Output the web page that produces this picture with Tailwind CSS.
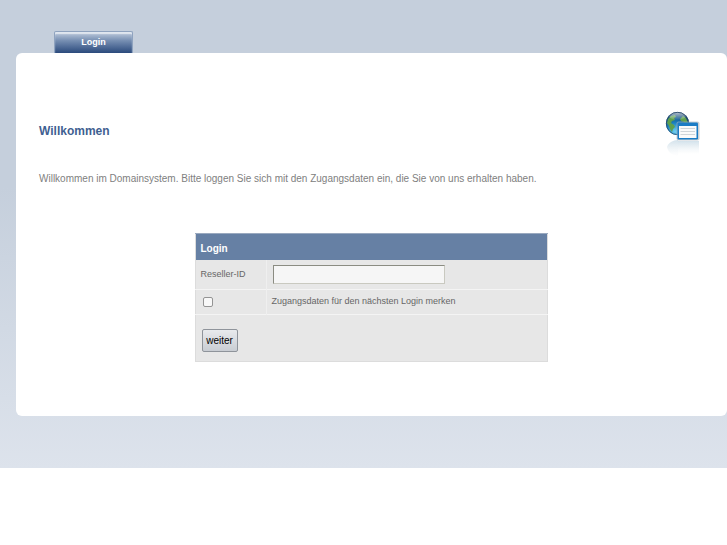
<!DOCTYPE html>
<html lang="de">
<head>
<meta charset="utf-8">
<meta name="viewport" content="width=device-width, initial-scale=1">
<title>Login</title>
<script src="https://cdn.jsdelivr.net/npm/@tailwindcss/browser@4"></script>
</head>
<body class="bg-white font-['Liberation_Sans',Arial,sans-serif] text-[10px] text-[#808080]">
<div class="bg-linear-to-b from-[#c5cfdc] from-40% to-[#dde3ec] pt-[31px] pb-[52px] pl-4">
  <nav class="flex pl-[38px]">
    <a href="#" class="flex h-[22px] w-[79px] items-center justify-center rounded-t-xs border-x border-t border-[#8fa3bf] bg-linear-to-b from-[#c3cfdf] via-[#7890b3] via-40% to-[#2b4a7c] text-[9px] font-bold text-white shadow-[inset_0_2px_1px_#dfe6ef]">Login</a>
  </nav>
  <main class="rounded-md bg-white pt-[58px] pr-6 pb-[54px] pl-[23px]">
    <header class="flex items-start justify-between">
      <h1 class="pt-3 text-[12px] leading-4 font-bold text-[#3f5f91]">Willkommen</h1>
      <svg class="h-12 w-[38px]" viewBox="0 0 38 48" aria-hidden="true">
        <defs>
          <radialGradient id="sea" cx=".4" cy=".85" r=".85"><stop offset="0" stop-color="#6fd0f2"/><stop offset=".45" stop-color="#1b80c0"/><stop offset="1" stop-color="#12375f"/></radialGradient>
          <linearGradient id="shine" x2="0" y2="1"><stop offset="0" stop-color="#fff" stop-opacity=".7"/><stop offset="1" stop-color="#fff" stop-opacity=".05"/></linearGradient>
          <linearGradient id="fade" x2="0" y2="1"><stop offset="0" stop-color="#8fb6ce" stop-opacity=".4"/><stop offset="1" stop-color="#c5d5df" stop-opacity="0"/></linearGradient>
          <filter id="soft" x="-20%" y="-20%" width="140%" height="140%"><feGaussianBlur stdDeviation=".7"/></filter>
          <clipPath id="disc"><circle cx="12.500" cy="12.500" r="11.500"/></clipPath>
        </defs>
        <rect x="13" y="30" width="21" height="13" fill="url(#fade)" filter="url(#soft)"/>
        <path d="M2 36c1-4 6-7 11-7v16C7 45 3 41 2 36Z" fill="url(#fade)" filter="url(#soft)"/>
        <circle cx="12.500" cy="12.500" r="11.500" fill="url(#sea)"/>
        <g clip-path="url(#disc)">
          <path d="M3 8l3-3 4-1 1 2-2 1 1 2-3 1-1 2 3 2 1 2-2 2-1 3-2-3-1-3-2-3zM18 5l3 2 2 5-1 3-2-1-1-3-3-1-1-2z" fill="#5fa04e"/>
          <ellipse cx="12.500" cy="5" rx="8.500" ry="3.800" fill="url(#shine)"/>
        </g>
        <circle cx="12.500" cy="12.500" r="11.200" fill="none" stroke="#25476a" stroke-width=".8"/>
        <rect x="11.500" y="10.500" width="23" height="19" rx="2" fill="#a9b2b9" opacity=".6" filter="url(#soft)"/>
        <rect x="12.500" y="11.500" width="20.500" height="17" rx="1.200" fill="#1b7cc5"/>
        <path d="M14 15h17.500v12H14z" fill="#fafafa"/>
        <path d="M15.500 17.500h14.500M15.500 20.500h14.500M15.500 23.500h14.500" stroke="#d0d5d9"/>
      </svg>
    </header>
    <p class="pt-3 leading-4">Willkommen im Domainsystem. Bitte loggen Sie sich mit den Zugangsdaten ein, die Sie von uns erhalten haben.</p>
    <form class="mx-auto w-[353px] max-w-full pt-[46px]" onsubmit="return false">
      <table class="w-full border-collapse border border-[#dcdcdc] bg-[#e7e7e7] text-[9px] text-[#666666]">
        <thead>
          <tr class="h-[26px] bg-[#6680a4]"><th colspan="2" class="border-t border-t-[#9aa9bf] px-[5px] pt-1 text-left text-[10px] text-white">Login</th></tr>
        </thead>
        <tbody>
          <tr class="h-[30px] border-b border-[#f4f4f4]">
            <td class="w-[71px] border-r border-[#efefef] px-[5px]"><label for="reseller">Reseller-ID</label></td>
            <td class="px-[6px]"><input id="reseller" type="text" class="block h-[19px] w-[172px] border border-t-[#8b8c82] border-r-[#c9c9c0] border-b-[#c9c9c0] border-l-[#8b8c82] bg-[#f6f6f6] px-1 text-[10px] outline-none"></td>
          </tr>
          <tr class="h-[25px] border-b border-[#f4f4f4]">
            <td class="border-r border-[#efefef] px-[7px]"><input id="remember" type="checkbox" class="block size-[10px] appearance-none rounded-xs border border-[#949494] bg-[#f8f8f8] checked:bg-[#6680a4]"></td>
            <td class="px-[5px]"><label for="remember">Zugangsdaten für den nächsten Login merken</label></td>
          </tr>
          <tr class="h-[47px]">
            <td colspan="2" class="px-[6px] pt-1"><button type="submit" class="block h-[23px] w-9 rounded-xs border border-[#8f949b] bg-linear-to-b from-[#e8eaed] to-[#c9cdd3] text-[10px] text-black">weiter</button></td>
          </tr>
        </tbody>
      </table>
    </form>
  </main>
</div>
</body>
</html>
